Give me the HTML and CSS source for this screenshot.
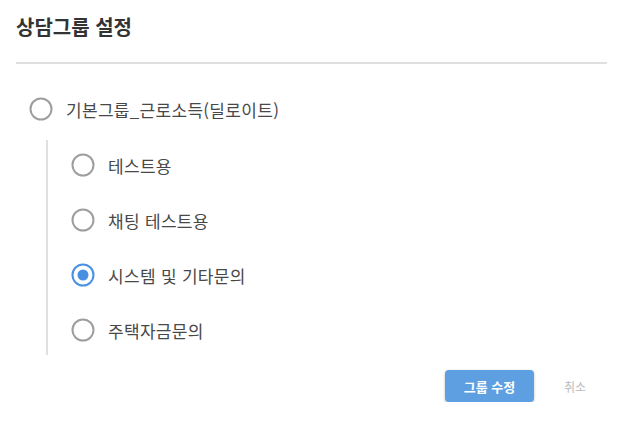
FILE: index.html
```html
<!DOCTYPE html>
<html lang="ko">
<head>
<meta charset="utf-8">
<link rel="stylesheet" href="styles.css">
</head>
<body>
<div class="dialog">
  <h2 class="title">상담그룹 설정</h2>
  <div class="divider"></div>
  <div class="group">
    <label class="row">
      <span class="radio"><svg viewBox="0 0 24 24" width="24" height="24"><circle cx="12" cy="12" r="10.5" fill="none" stroke="#9e9e9e" stroke-width="2"/></svg></span>
      <span class="label">기본그룹_근로소득(딜로이트)</span>
    </label>
    <div class="children">
      <label class="row">
        <span class="radio"><svg viewBox="0 0 24 24" width="24" height="24"><circle cx="12" cy="12" r="10.5" fill="none" stroke="#9e9e9e" stroke-width="2"/></svg></span>
        <span class="label">테스트용</span>
      </label>
      <label class="row">
        <span class="radio"><svg viewBox="0 0 24 24" width="24" height="24"><circle cx="12" cy="12" r="10.5" fill="none" stroke="#9e9e9e" stroke-width="2"/></svg></span>
        <span class="label">채팅 테스트용</span>
      </label>
      <label class="row">
        <span class="radio"><svg viewBox="0 0 24 24" width="24" height="24"><circle cx="12" cy="12" r="10.5" fill="none" stroke="#4a90e2" stroke-width="2"/><circle cx="12" cy="12" r="5.5" fill="#4a90e2"/></svg></span>
        <span class="label">시스템 및 기타문의</span>
      </label>
      <label class="row">
        <span class="radio"><svg viewBox="0 0 24 24" width="24" height="24"><circle cx="12" cy="12" r="10.5" fill="none" stroke="#9e9e9e" stroke-width="2"/></svg></span>
        <span class="label">주택자금문의</span>
      </label>
    </div>
  </div>
  <div class="actions">
    <button class="btn primary">그룹 수정</button>
    <button class="btn cancel">취소</button>
  </div>
</div>
</body>
</html>
```
FILE: styles.css
```css
* { box-sizing: border-box; }
body {
  margin: 0;
  background: #fff;
  font-family: "Noto Sans CJK KR", "Noto Sans", sans-serif;
  color: #444;
}
.dialog {
  width: 591px;
  margin-left: 16px;
}
.title {
  margin: 12px 0 0;
  font-size: 20px;
  line-height: 29px;
  font-weight: 700;
  color: #333;
}
.divider {
  margin-top: 21px;
  height: 2px;
  background: #e0e0e0;
}
.group {
  margin-top: 25px;
  padding-left: 13px;
}
.row {
  display: flex;
  align-items: center;
  height: 40px;
  gap: 13px;
}
.radio {
  width: 24px;
  height: 24px;
  display: flex;
}
.label {
  font-size: 17px;
  letter-spacing: 0.3px;
  color: #484848;
}
.children {
  margin-top: 11px;
  margin-left: 17px;
  border-left: 2px solid #e0e0e0;
  padding: 5px 0 5px 23px;
  display: flex;
  flex-direction: column;
  gap: 15px;
}
.actions {
  margin-top: 15px;
  display: flex;
  justify-content: flex-end;
  gap: 9px;
}
.btn {
  height: 32px;
  border: none;
  border-radius: 4px;
  font-family: "Noto Sans CJK KR", sans-serif;
  font-size: 13px;
  font-weight: 700;
  cursor: pointer;
}
.primary {
  width: 89px;
  background: #5d9fe0;
  color: #fff;
  box-shadow: 0 1px 3px rgba(0,0,0,0.25);
}
.cancel {
  width: 64px;
  background: transparent;
  color: #bbb;
  font-size: 12px;
  font-weight: 400;
}
```
